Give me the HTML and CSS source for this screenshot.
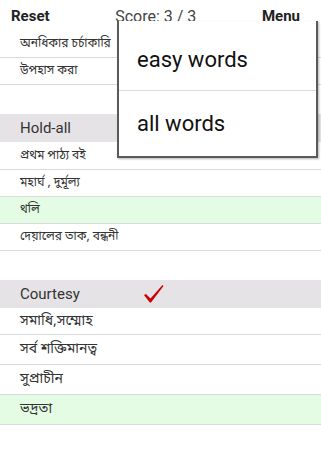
FILE: index.html
```html
<!DOCTYPE html>
<html lang="bn">
<head>
    <meta charset="UTF-8">
    <meta name="viewport" content="width=device-width, initial-scale=1.0">
    <title>Word Quiz</title>
    <link rel="stylesheet" href="styles.css">
</head>
<body>

    <div class="topbar">
        <span class="bar-btn">Reset</span>
        <span class="score">Score: 3 / 3</span>
        <span class="bar-btn">Menu</span>
    </div>

    <div class="list">
        <div class="row">অনধিকার চর্চাকারি</div>
        <div class="row">উপহাস করা</div>

        <div class="gap"></div>
        <div class="section">Hold-all</div>
        <div class="row first">প্রথম পাঠ্য বই</div>
        <div class="row">মহার্ঘ , দুর্মূল্য</div>
        <div class="row right">থলি</div>
        <div class="row">দেয়ালের তাক, বন্ধনী</div>

        <div class="gap"></div>
        <div class="section">
            Courtesy
            <svg class="tick" width="22" height="20" viewBox="0 0 22 20">
                <path d="M1 11 L3 10 L7.5 14.5 L19.5 1 L20.5 2 L8 18.5 L6.8 18.5 Z" fill="#cc0000"/>
            </svg>
        </div>
        <div class="row big">সমাধি,সম্মোহ</div>
        <div class="row big tall">সর্ব শক্তিমানত্ব</div>
        <div class="row big tall">সুপ্রাচীন</div>
        <div class="row big tall right">ভদ্রতা</div>
    </div>

    <!-- popup menu opened from the Menu button -->
    <div class="menu">
        <div class="menu-item top">easy words</div>
        <div class="menu-item">all words</div>
    </div>

</body>
</html>
```

FILE: styles.css
```css
body {
    margin: 0;
    background: #fff;
    font-family: Roboto, "Liberation Sans", sans-serif;
    color: #333;
}
.topbar {
    height: 31px;
    display: flex;
    align-items: center;
    justify-content: space-between;
    padding: 0 21px 0 11px;
    font-size: 15px;
}
.bar-btn {
    font-weight: bold;
    color: #222;
}
.score {
    font-size: 16px;
    padding-top: 1px;
    color: #444;
}
.row {
    height: 27px;
    box-sizing: border-box;
    border-bottom: 1px solid #dadada;
    padding-left: 20px;
    display: flex;
    align-items: center;
    font-family: "Noto Sans Bengali", "Noto Serif Bengali", "Lohit Bengali", FreeSerif, serif;
    font-size: 12px;
    color: #333;
}
.row.first {
    height: 28px;
}
.row.big {
    font-size: 14px;
}
.row.tall {
    height: 30px;
}
.row.right {
    background: #e3fce3;
}
.gap {
    height: 29px;
}
.section {
    position: relative;
    height: 28px;
    display: flex;
    align-items: center;
    padding-left: 20px;
    background: #e6e3e6;
    font-size: 15px;
    color: #333;
}
.tick {
    position: absolute;
    left: 143px;
    top: 4px;
}
.menu {
    position: absolute;
    left: 117px;
    top: 21px;
    width: 201px;
    height: 137px;
    box-sizing: border-box;
    background: #fff;
    border: 2px solid #5a5a5a;
    border-top: none;
    box-shadow: 1px 1px 2px rgba(0, 0, 0, 0.3);
}
.menu-item {
    font-size: 22px;
    line-height: 26px;
    color: #111;
    padding: 20px 0 0 18px;
    height: 64px;
    box-sizing: border-box;
}
.menu-item.top {
    height: 70px;
    padding-top: 26px;
    border-bottom: 1px solid #dcdcdc;
}
```
